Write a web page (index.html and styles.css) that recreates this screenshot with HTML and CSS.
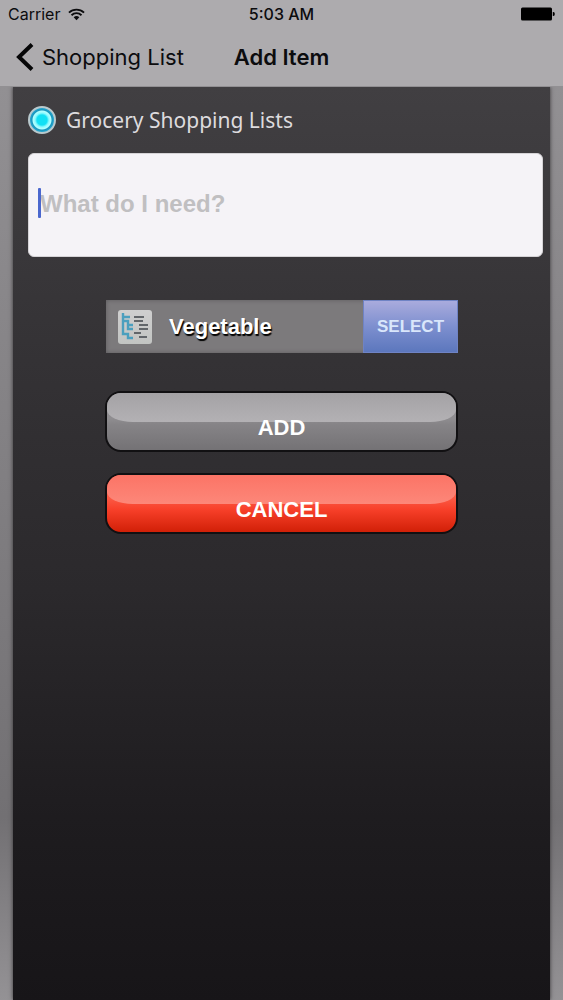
FILE: index.html
```html
<!DOCTYPE html>
<html lang="en">
  <head>
    <meta charset="UTF-8" />
    <meta name="viewport" content="width=device-width, initial-scale=1.0" />
    <title>Add Item</title>
    <link rel="stylesheet" href="styles.css">
  </head>
  <body>
    <header class="header">
      <div class="status-bar">
        <div class="carrier">
          <span>Carrier</span>
          <svg class="wifi" viewBox="0 0 18 13" aria-hidden="true">
            <path d="M1 4.5a11.5 11.5 0 0 1 16 0M3.7 7.3a7.6 7.6 0 0 1 10.6 0" fill="none" stroke="#0c0c0e" stroke-width="1.9" />
            <path d="M6 9.5a4.4 4.4 0 0 1 6 0l-3 3z" fill="#0c0c0e" />
          </svg>
        </div>
        <span class="time">5:03 AM</span>
        <svg class="battery" viewBox="0 0 34 14" aria-hidden="true">
          <rect x="0" y="0.5" width="31" height="13" rx="1.5" />
          <path d="M31.8 5h.6a1.4 2 0 0 1 0 4h-.6z" />
        </svg>
      </div>
      <nav class="nav-bar">
        <a href="#" class="back">
          <svg class="chevron" viewBox="0 0 18 28" aria-hidden="true">
            <path d="M16 1.5 3 14l13 12.5" fill="none" stroke="#060607" stroke-width="4" />
          </svg>
          Shopping List
        </a>
        <h1 class="title">Add Item</h1>
      </nav>
    </header>

    <main class="page">
      <form class="panel">
        <label class="list-option">
          <input type="radio" name="list" class="radio" checked />
          <span>Grocery Shopping Lists</span>
        </label>

        <div class="item-field">
          <input type="text" class="item-input" placeholder="What do I need?" aria-label="What do I need?" />
          <span class="cursor"></span>
        </div>

        <div class="actions">
          <div class="category">
            <svg class="category-icon" viewBox="0 0 34 34" aria-hidden="true">
              <defs>
                <linearGradient id="tile" x2="0" y2="1">
                  <stop offset="0" stop-color="#cfcfcf" />
                  <stop offset="1" stop-color="#c2c4c2" />
                </linearGradient>
              </defs>
              <rect width="34" height="34" rx="3" fill="url(#tile)" />
              <path d="M5 3v21h5v4h5M5 7h7M5 11h5v8h5M10 15h5" fill="none" stroke="#4b9fbe" stroke-width="2.4" />
              <path d="M16 7h10M16 11h9M21 15h9M21 19h9M16 23h7M21 27h8" fill="none" stroke="#62666a" stroke-width="2.2" />
            </svg>
            <span class="category-name">Vegetable</span>
            <button type="button" class="select-button">SELECT</button>
          </div>
          <button type="submit" class="button add">ADD</button>
          <button type="button" class="button cancel">CANCEL</button>
        </div>
      </form>
    </main>
  </body>
</html>
```
FILE: styles.css
```css
* {
  box-sizing: border-box;
}

body {
  margin: 0;
  min-height: 100vh;
  display: flex;
  flex-direction: column;
  font-family: "Liberation Sans", Arial, sans-serif;
  background: #1a181b;
}

/* Header */
.header {
  background: #adabae;
  color: #0c0c0e;
  font-family: Inter, "Liberation Sans", sans-serif;
  border-bottom: 1px solid #929093;
}

.status-bar {
  display: grid;
  grid-template-columns: 1fr auto 1fr;
  align-items: center;
  height: 28px;
  padding: 0 8px;
  font-size: 16px;
}

.carrier {
  display: flex;
  align-items: center;
  gap: 8px;
}

.wifi {
  width: 17px;
  height: 13px;
}

.time {
  font-weight: 500;
}

.battery {
  width: 34px;
  height: 14px;
  justify-self: end;
  fill: #000;
}

.nav-bar {
  display: grid;
  grid-template-columns: 1fr auto 1fr;
  align-items: center;
  height: 58px;
  padding: 0 16px;
}

.back {
  display: flex;
  align-items: center;
  gap: 8px;
  color: #0c0c0e;
  font-size: 22px;
  text-decoration: none;
  white-space: nowrap;
}

.chevron {
  width: 18px;
  height: 28px;
}

.title {
  margin: 0;
  font-size: 22px;
  font-weight: 600;
}

/* Page */
.page {
  flex: 1;
  display: flex;
  padding: 0 13px;
  background: linear-gradient(#929093, #848285 35%, #727073 80%, #949295);
}

.panel {
  flex: 1;
  padding: 16px 7px 40px 15px;
  background: linear-gradient(#413f42, #343235 30%, #2b292c 55%, #1e1c1f 80%, #171518);
  box-shadow: 0 0 4px #343235;
  clip-path: inset(0 -6px);
}

.list-option {
  display: flex;
  align-items: center;
  gap: 10px;
  height: 34px;
  color: #dddbde;
  font-family: "Noto Sans", "Open Sans", sans-serif;
  font-size: 21px;
}

.radio {
  appearance: none;
  width: 28px;
  height: 28px;
  margin: 0;
  border: 2px solid #b9c9cd;
  border-radius: 50%;
  background: radial-gradient(circle, #12e0f4 0 5px, #8ffaff 7px, #b4ffff 9px, #1695bd 10px, #2ba7cf 12px);
}

.item-field {
  position: relative;
  margin-top: 16px;
}

.item-input {
  display: block;
  width: 100%;
  height: 104px;
  padding: 0 11px 2px;
  border: 1px solid #d5d3d6;
  border-radius: 6px;
  background: #f5f3f7;
  color: #343235;
  font-family: inherit;
  font-size: 24px;
  font-weight: bold;
  outline: none;
}

.item-input::placeholder {
  color: #c0bfc1;
  opacity: 1;
}

.cursor {
  position: absolute;
  top: 35px;
  left: 10px;
  width: 3px;
  height: 30px;
  border-radius: 1px;
  background: #4a67ce;
}

/* Buttons */
.actions {
  display: flex;
  flex-direction: column;
  margin: 43px 85px 0 77px;
}

.category {
  display: flex;
  align-items: center;
  height: 53px;
  padding-left: 12px;
  margin: 0 0 38px 1px;
  background: #7c7a7c;
  box-shadow: inset 0 0 4px #5c5a5d;
}

.category-icon {
  width: 34px;
  height: 34px;
}

.category-name {
  flex: 1;
  padding-left: 17px;
  color: #fff;
  font-size: 22px;
  font-weight: bold;
  text-shadow: 1px 2px 1px #000;
}

.select-button {
  align-self: stretch;
  width: 95px;
  padding: 0;
  border: 1px solid #6f83c4;
  background: linear-gradient(#a9abdd, #7d8fcf 50%, #5c77bd);
  color: #d9e6fb;
  font-family: inherit;
  font-size: 17px;
  font-weight: bold;
}

.button {
  position: relative;
  isolation: isolate;
  height: 61px;
  padding: 12px 0 0;
  border: 2px solid #111012;
  border-radius: 16px;
  overflow: hidden;
  color: #fff;
  font-family: inherit;
  font-size: 22px;
  font-weight: bold;
}

/* Glossy highlight on the upper half */
.button::before {
  content: "";
  position: absolute;
  z-index: -1;
  top: 0;
  left: 0;
  right: 0;
  height: 29px;
  border-radius: 0 0 26px 26px / 0 0 12px 12px;
}

.add {
  margin-bottom: 21px;
  background: linear-gradient(#8f8d90 45%, #868487 55%, #747275);
}

.add::before {
  background: linear-gradient(#a4a2a5, #b3b1b4);
}

.cancel {
  background: linear-gradient(#fb5a45 40%, #f8402a 60%, #d12007);
}

.cancel::before {
  background: linear-gradient(#fb7466, #fd8779);
}
```
